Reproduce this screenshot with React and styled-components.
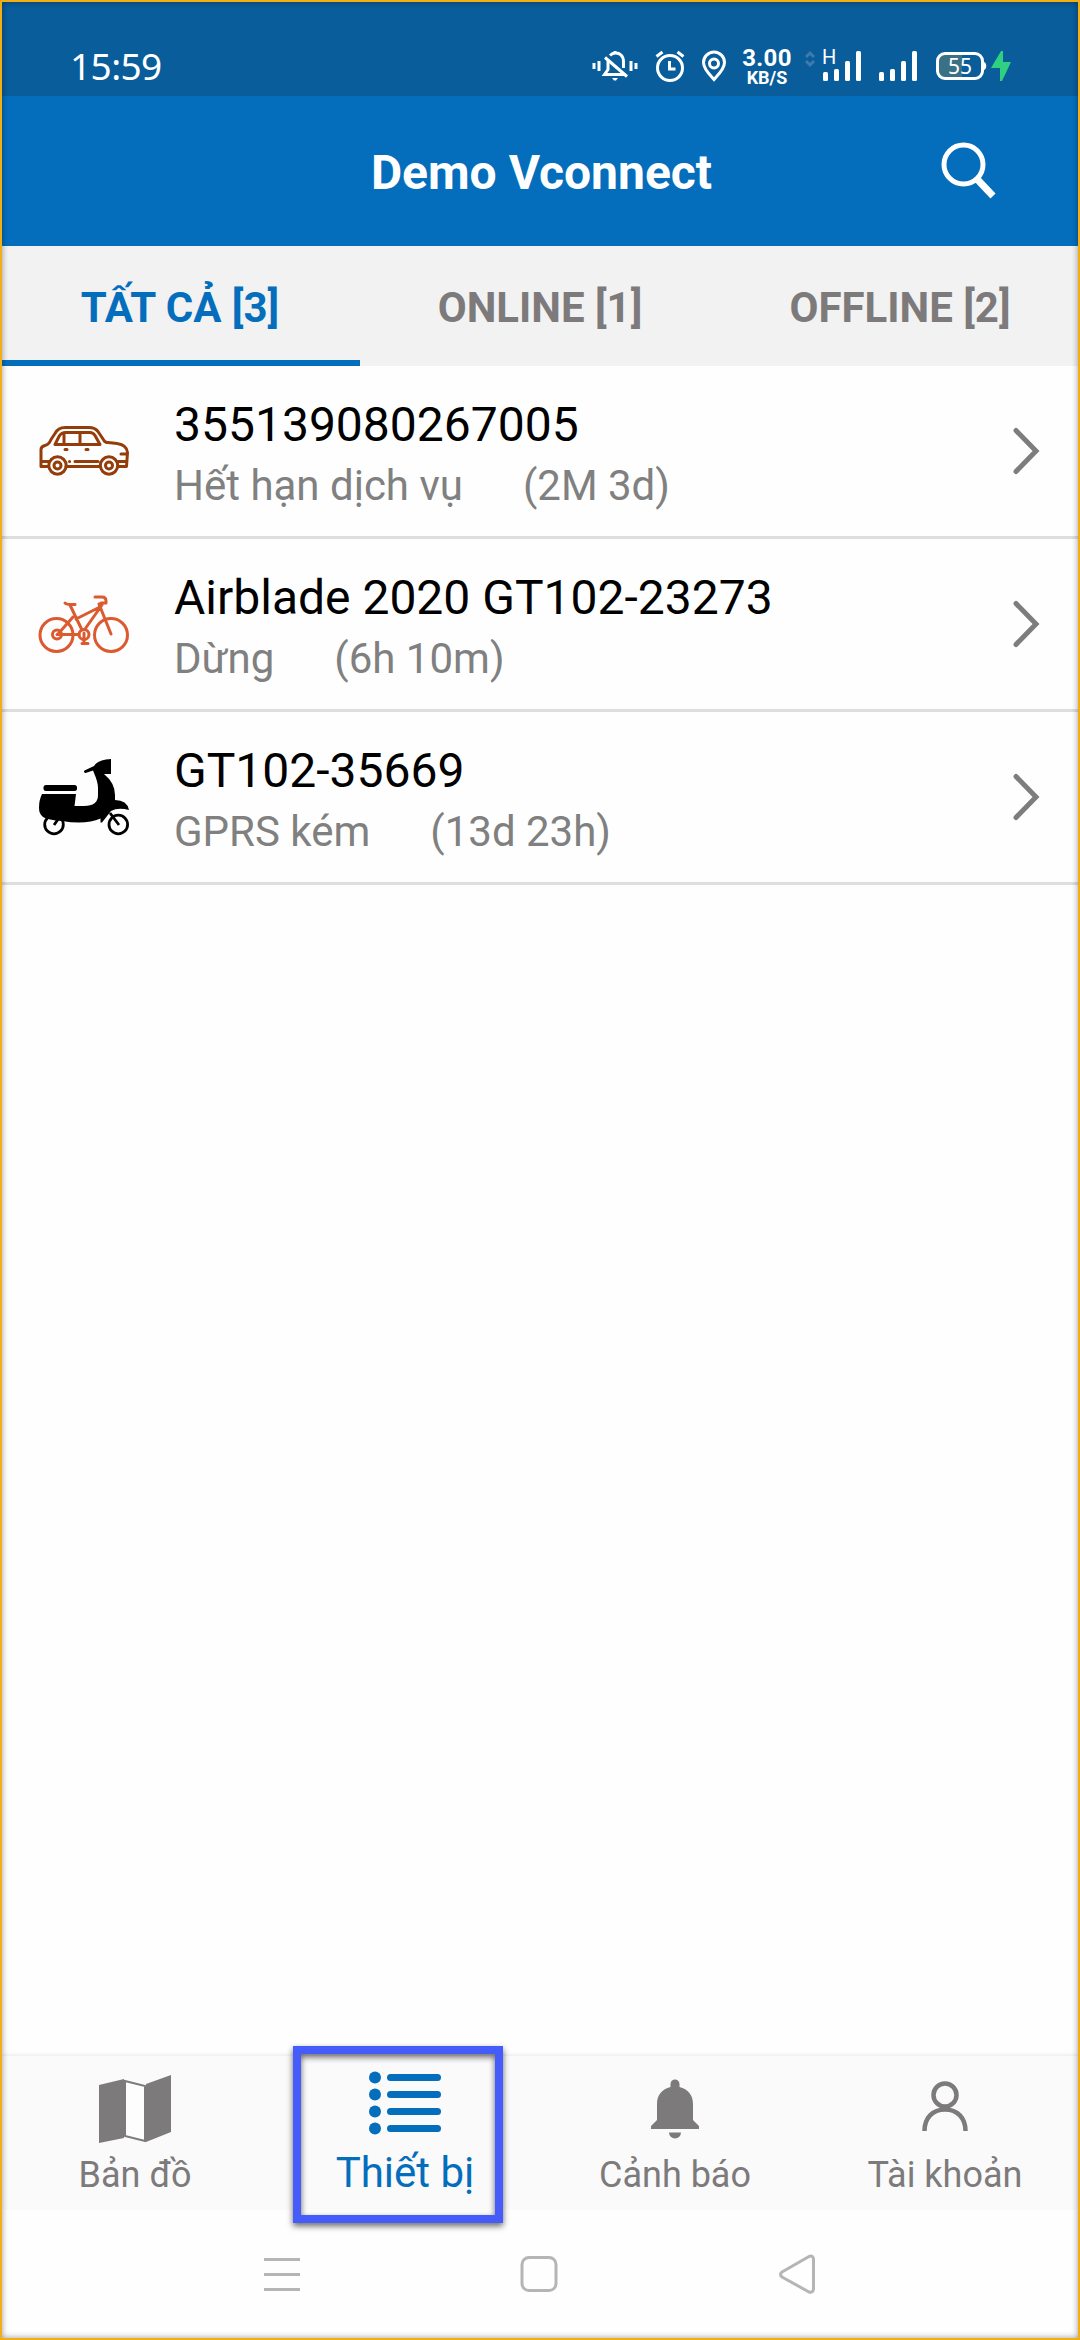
import React from 'react';
import styled, { createGlobalStyle } from 'styled-components';

const Global = createGlobalStyle`
  * { box-sizing: border-box; }
  html, body { margin: 0; padding: 0; background: #fff; }
  body { font-family: Roboto, "Noto Sans", sans-serif; }
  svg { display: block; flex: none; }
`;

const Screen = styled.div`
  position: relative;
  width: 1080px;
  height: 2340px;
  display: flex;
  flex-direction: column;
  background: #fefefe;
  overflow: hidden;
`;

const Frame = styled.div`
  position: absolute;
  inset: 0;
  border: 2px solid #f2ae14;
  box-shadow: inset 0 0 6px rgba(0, 0, 0, 0.4);
  pointer-events: none;
`;

const StatusBar = styled.div`
  height: 96px;
  flex: none;
  display: flex;
  align-items: flex-start;
  justify-content: space-between;
  padding: 48px 68px 0 70px;
  background: #095d9b;
  color: #fff;
`;

const Clock = styled.span`
  font-family: "Noto Sans", sans-serif;
  font-size: 37px;
  line-height: 35px;
  letter-spacing: -0.6px;
`;

const StatusIcons = styled.div`
  display: flex;
  align-items: flex-start;
`;

const StatusGlyph = styled.svg`
  margin-left: ${(p) => p.$gap || 0}px;
`;

const NetSpeed = styled.div`
  width: 50px;
  margin-left: 15px;
  display: flex;
  flex-direction: column;
  align-items: center;
  font-weight: 700;
`;

const SpeedValue = styled.span`
  font-size: 24px;
  line-height: 20px;
  letter-spacing: 0.3px;
`;

const SpeedUnit = styled.span`
  font-size: 18px;
  line-height: 19px;
`;

const Header = styled.header`
  height: 150px;
  flex: none;
  display: grid;
  grid-template-columns: 1fr auto 1fr;
  align-items: center;
  background: #056ebc;
  color: #fff;
`;

const Title = styled.h1`
  grid-column: 2;
  margin: 3px 0 0 3px;
  font-size: 48px;
  line-height: 60px;
  font-weight: 700;
`;

const SearchButton = styled.div`
  justify-self: end;
  margin-right: 82px;
`;

const Tabs = styled.nav`
  height: 120px;
  flex: none;
  display: grid;
  grid-template-columns: repeat(3, 1fr);
  background: #f2f2f2;
`;

const Tab = styled.div`
  display: flex;
  align-items: center;
  justify-content: center;
  padding-top: 9px;
  font-size: 42px;
  line-height: 50px;
  font-weight: 700;
  color: ${(p) => (p.$active ? '#056ebc' : '#7d7a7b')};
  border-bottom: 6px solid ${(p) => (p.$active ? '#056ebc' : 'transparent')};
`;

const List = styled.main`
  flex: 1;
  display: flex;
  flex-direction: column;
`;

const Row = styled.div`
  height: 173px;
  display: flex;
  align-items: center;
  padding: 0 40px 0 38px;
  border-bottom: 3px solid #dedede;
`;

const RowText = styled.div`
  flex: 1;
  display: flex;
  flex-direction: column;
  gap: 3px;
  padding-top: 6px;
  margin-left: 44px;
`;

const DeviceName = styled.div`
  font-size: 48px;
  line-height: 60px;
  color: #000;
`;

const DeviceStatus = styled.div`
  display: flex;
  gap: 60px;
  font-size: 42px;
  line-height: 56px;
  color: #808080;
`;

const BottomBar = styled.nav`
  height: 152px;
  flex: none;
  display: grid;
  grid-template-columns: repeat(4, 1fr);
  background: #fafafa;
  box-shadow: 0 -1px 4px rgba(0, 0, 0, 0.09);
`;

const BottomItem = styled.div`
  position: relative;
  display: flex;
  flex-direction: column;
  align-items: center;
  padding-top: 11px;
  color: ${(p) => (p.$active ? '#056ebc' : '#7d7a7b')};
`;

const BottomLabel = styled.span`
  height: 48px;
  font-size: ${(p) => (p.$active ? 42 : 36)}px;
  line-height: ${(p) => (p.$active ? 44 : 48)}px;
  white-space: nowrap;
`;

const Highlight = styled.div`
  position: absolute;
  left: 23px;
  top: -10px;
  width: 210px;
  height: 177px;
  border: 8px solid #455cfa;
  filter: drop-shadow(0 3px 3px rgba(0, 0, 0, 0.6));
  z-index: 1;
`;

const SystemBar = styled.footer`
  height: 132px;
  flex: none;
  display: flex;
  align-items: flex-start;
  padding: 46px 264px 0;
  justify-content: space-between;
  color: #b5b5b5;
`;

function StatusBell() {
  return (
    <StatusGlyph width="46" height="36" viewBox="0 0 46 36" fill="none" stroke="#fff" strokeWidth="3">
      <path d="M2 15v6M7 13v10M39 13v10M44 15v6" />
      <path d="M32 26.500H12.500l3.500-5v-9M18 7.500c3-3 8-3.200 11-.5 2 2 2.500 4 2.500 7v6M23 5.500V3" />
      <path d="M13 9.500l22 19" />
      <path d="M20 30h6l-2 2.500h-2z" fill="#fff" stroke="none" />
    </StatusGlyph>
  );
}

function StatusAlarm() {
  return (
    <StatusGlyph $gap={17} width="30" height="36" viewBox="0 0 30 36" fill="none" stroke="#fff" strokeWidth="3">
      <circle cx="15" cy="20" r="12.500" />
      <path d="M14.500 13v8h6M1.500 8.500l6-4.500M28.500 8.500l-6-4.500" />
    </StatusGlyph>
  );
}

function StatusPin() {
  return (
    <StatusGlyph $gap={16} width="26" height="36" viewBox="0 0 26 36" fill="none" stroke="#fff" strokeWidth="3">
      <path d="M13 31.500C9 27 2.500 21 2.500 14.500a10.500 10.500 0 0 1 21 0C23.500 21 17 27 13 31.500z" />
      <circle cx="13" cy="15.500" r="4.500" />
    </StatusGlyph>
  );
}

function DataArrows() {
  return (
    <StatusGlyph $gap={13} width="10" height="36" viewBox="0 0 10 36" fill="none" stroke="#3f7bab" strokeWidth="3">
      <path d="M1 9l4-4 4 4M1 13l4 4 4-4" />
    </StatusGlyph>
  );
}

const NetworkType = styled.span`
  position: absolute;
  left: 0;
  top: 0;
  font-size: 20px;
  line-height: 19px;
`;

const SignalBox = styled.div`
  position: relative;
  margin-left: ${(p) => p.$gap}px;
`;

function Signal({ gap, label }) {
  return (
    <SignalBox $gap={gap}>
      {label && <NetworkType>{label}</NetworkType>}
      <svg width="40" height="36" viewBox="0 0 40 36" fill="#fff">
        <rect x="1" y="24" width="5" height="9" rx="1.500" />
        <rect x="12" y="21" width="5" height="12" rx="1.500" />
        <rect x="23" y="13" width="5" height="20" rx="1.500" />
        <rect x="34" y="3" width="5" height="30" rx="1.500" />
      </svg>
    </SignalBox>
  );
}

const Battery = styled.div`
  width: 48px;
  height: 28px;
  margin: 4px 0 0 18px;
  border: 3px solid #fff;
  border-radius: 9px;
  background: linear-gradient(to right, #3a7184 55%, #095d9b 55%);
  font-family: "Noto Sans", sans-serif;
  font-size: 21px;
  line-height: 22px;
  text-align: center;
`;

function Charging() {
  return (
    <StatusGlyph $gap={0} width="28" height="36" viewBox="0 0 28 36">
      <path d="M0 14c3 1 3 7 0 8z" fill="#fff" />
      <path d="M17 3L7 20h9l0 13h2l9-19h-8V3z" fill="#2fd180" />
    </StatusGlyph>
  );
}

function CarIcon() {
  return (
    <svg width="92" height="92" viewBox="0 5.5 92 92" fill="none" stroke="#943d0b" strokeWidth="3" strokeLinecap="round" strokeLinejoin="round">
      <path d="M10 67H3V50q0-3 4-4 4-1 6-6l4-6q3-6 10-6h24q6 0 9 4l6 9q1 2 4 2l9 1q10 1.500 10.500 9L88.500 67H80M28 67h34" />
      <path d="M17 45l4-8q2-4 7-4h24q3 0 5 3l5 9zM42 33v12M26 34v11" />
      <path d="M27 50h2M48 50h2M83 54.500h5M4 62h7M37 62h23M80 62h8M31.500 62h.1" />
      <circle cx="19.500" cy="66" r="8.700" />
      <circle cx="19.500" cy="66" r="3.500" />
      <circle cx="71" cy="66" r="8.700" />
      <circle cx="71" cy="66" r="3.500" />
    </svg>
  );
}

function BikeIcon() {
  return (
    <svg width="92" height="92" viewBox="0 5 92 92" fill="none" stroke="#dc5a30" strokeWidth="3" strokeLinecap="round" strokeLinejoin="round">
      <circle cx="18.500" cy="62" r="16.500" />
      <circle cx="73" cy="62" r="16.500" />
      <circle cx="19" cy="61.500" r="4.500" />
      <circle cx="46" cy="61.500" r="5" />
      <path d="M19 61.500h22M20 61L35 44M44 57L32 32M27 30q2 2 10 1.500M38 46l24-12M47 56l17-24M61 31l12 30M57 24h7q4 0 4 4v2h-5l-2 4M46 60v10M44 70.500h6" />
    </svg>
  );
}

function ScooterIcon() {
  return (
    <svg width="92" height="92" viewBox="0 0 92 92" fill="#000">
      <rect x="5.500" y="34" width="33.500" height="6" rx="2.500" />
      <path d="M4 43H38L36.500 55H46Q60 55 60 44V37Q60 31 56 22L55 19.500 47.500 22Q45 21.500 46.500 19.500L56 15Q60 8.500 73 8V23H66Q77 32 77 44V49Q89 49 91 59Q80 56 73 60L64 71.500H62.500V67.500Q48 74 24 70Q10 69 5 66Q1 63 1 57Q1 49 4 43z" />
      <g fill="none" stroke="#000" strokeWidth="2.800">
        <circle cx="16" cy="73.500" r="9.300" />
        <circle cx="80.300" cy="73.500" r="9.300" />
        <path d="M16 74l5-7M81 74L72 62" />
      </g>
    </svg>
  );
}

function Chevron() {
  return (
    <svg width="28" height="48" viewBox="0 0 28 48" fill="none" stroke="#7d7d7d" strokeWidth="5" strokeLinecap="round">
      <path d="M4 3.500L24 24 4 44.500" />
    </svg>
  );
}

function MapIcon() {
  return (
    <svg width="76" height="84" viewBox="0 0 76 84" fill="currentColor">
      <path d="M2 18l25-6v59L2 76zM49 17l25-9v57l-25 10z" />
      <path d="M28 14l20 5v55l-20-5z" fill="#fdfdfd" stroke="currentColor" strokeWidth="2" />
    </svg>
  );
}

function ListIcon() {
  return (
    <svg width="76" height="84" viewBox="0 0 76 84" fill="currentColor">
      {[10.5, 27.5, 44.5, 61.5].map((y) => (
        <g key={y}>
          <circle cx="8" cy={y} r="6" />
          <rect x="20" y={y - 3.5} width="54" height="7" rx="3.500" />
        </g>
      ))}
    </svg>
  );
}

function BellIcon() {
  return (
    <svg width="76" height="84" viewBox="0 0 76 84" fill="currentColor">
      <path d="M33.500 20v-3a4.500 4.500 0 0 1 9 0v3C51 22 56 28 56 37v16l6 6v3H14v-3l6-6V37c0-9 5-15 13.500-17z" />
      <path d="M32 65.500h12a6 6 0 0 1-12 0z" />
    </svg>
  );
}

function UserIcon() {
  return (
    <svg width="76" height="84" viewBox="0 0 76 84" fill="none" stroke="currentColor" strokeWidth="4.500">
      <circle cx="38" cy="28" r="11.500" />
      <path d="M17.500 64c0-13 8-21.500 20.500-21.500S58.500 51 58.500 64" />
    </svg>
  );
}

const devices = [
  { name: '355139080267005', status: 'Hết hạn dịch vụ', time: '(2M 3d)', Icon: CarIcon },
  { name: 'Airblade 2020 GT102-23273', status: 'Dừng', time: '(6h 10m)', Icon: BikeIcon },
  { name: 'GT102-35669', status: 'GPRS kém', time: '(13d 23h)', Icon: ScooterIcon },
];

const menu = [
  { label: 'Bản đồ', Icon: MapIcon },
  { label: 'Thiết bị', Icon: ListIcon, active: true },
  { label: 'Cảnh báo', Icon: BellIcon },
  { label: 'Tài khoản', Icon: UserIcon },
];

export default function App() {
  return (
    <Screen>
      <Global />
      <StatusBar>
        <Clock>15:59</Clock>
        <StatusIcons>
          <StatusBell />
          <StatusAlarm />
          <StatusPin />
          <NetSpeed>
            <SpeedValue>3.00</SpeedValue>
            <SpeedUnit>KB/S</SpeedUnit>
          </NetSpeed>
          <DataArrows />
          <Signal gap={7} label="H" />
          <Signal gap={16} />
          <Battery>55</Battery>
          <Charging />
        </StatusIcons>
      </StatusBar>
      <Header>
        <Title>Demo Vconnect</Title>
        <SearchButton>
          <svg width="58" height="62" viewBox="0 0 58 62" fill="none" stroke="#fff">
            <circle cx="23.500" cy="24.500" r="19.500" strokeWidth="5" />
            <path d="M36.500 38.500l16.500 17.500" strokeWidth="7" />
          </svg>
        </SearchButton>
      </Header>
      <Tabs>
        <Tab $active>TẤT CẢ [3]</Tab>
        <Tab>ONLINE [1]</Tab>
        <Tab>OFFLINE [2]</Tab>
      </Tabs>
      <List>
        {devices.map(({ name, status, time, Icon }) => (
          <Row key={name}>
            <Icon />
            <RowText>
              <DeviceName>{name}</DeviceName>
              <DeviceStatus>
                <span>{status}</span>
                <span>{time}</span>
              </DeviceStatus>
            </RowText>
            <Chevron />
          </Row>
        ))}
      </List>
      <BottomBar>
        {menu.map(({ label, Icon, active }) => (
          <BottomItem key={label} $active={active}>
            <Icon />
            <BottomLabel $active={active}>{label}</BottomLabel>
            {active && <Highlight />}
          </BottomItem>
        ))}
      </BottomBar>
      <SystemBar>
        <svg width="36" height="40" viewBox="0 0 36 40" stroke="currentColor" strokeWidth="3">
          <path d="M0 5.500h36M0 20.500h36M0 35.500h36" />
        </svg>
        <svg width="38" height="40" viewBox="0 0 38 40" fill="none" stroke="currentColor" strokeWidth="3">
          <rect x="2" y="3.500" width="34" height="33" rx="7" />
        </svg>
        <svg width="38" height="40" viewBox="0 0 38 40" fill="none" stroke="currentColor" strokeWidth="3" strokeLinejoin="round">
          <path d="M31 2.500L4 18q-3 2.500 0 5l27 15q4 1 4.500-3V5q-.5-4-4.500-2.500z" />
        </svg>
      </SystemBar>
      <Frame />
    </Screen>
  );
}
